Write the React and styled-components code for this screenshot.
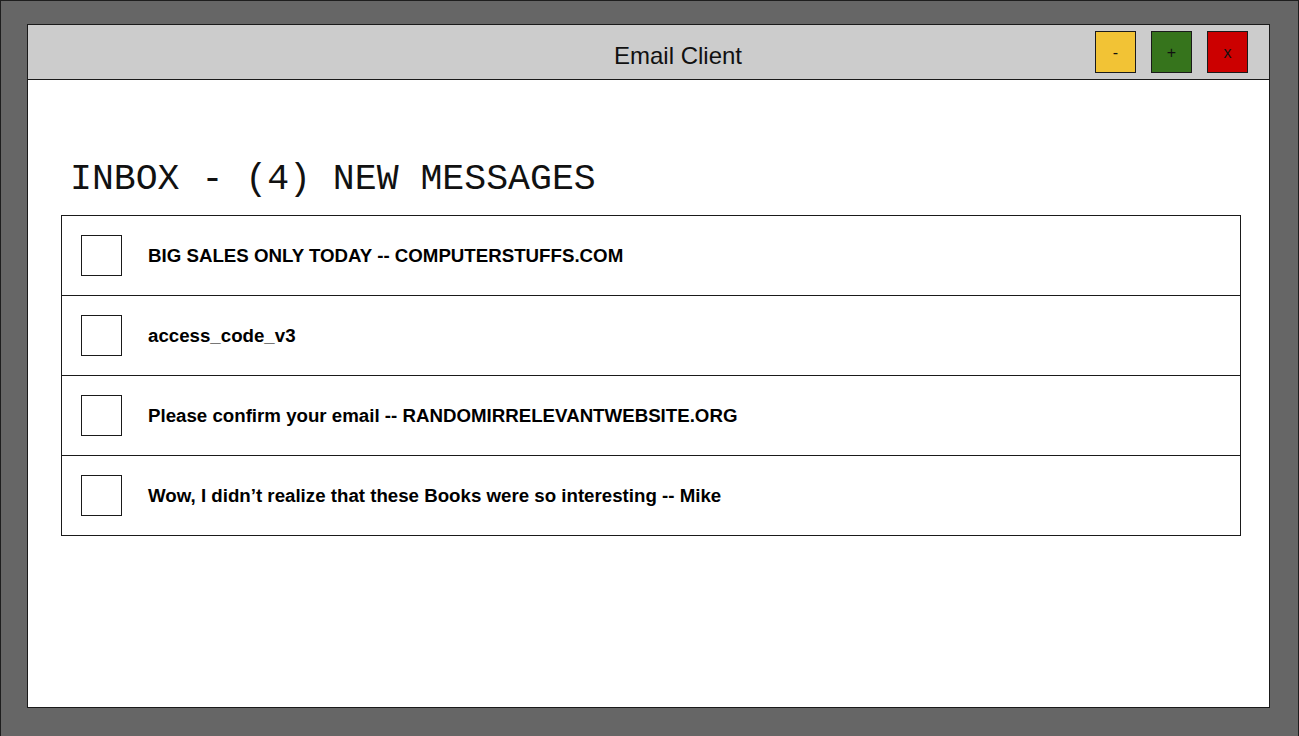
import styled, { createGlobalStyle } from 'styled-components'

const GlobalStyle = createGlobalStyle`
html, body {
  margin: 0;
  padding: 0;
  background: #666666;
}
body {
  font-family: "Liberation Sans", Arial, sans-serif;
  overflow: hidden;
}
`

const Screen = styled.div`
box-sizing: border-box;
width: 1299px;
height: 736px;
border: 1px solid #1e1e1e;
border-bottom: none;
background: #666666;
padding: 23px 0 0 26px;
`

const Window = styled.div`
box-sizing: border-box;
width: 1243px;
height: 684px;
background: #fff;
border: 1px solid #1a1a1a;
display: flex;
flex-direction: column;
`

const TitleBar = styled.div`
box-sizing: border-box;
height: 55px;
background: #cccccc;
border-bottom: 1px solid #1a1a1a;
display: flex;
align-items: center;
padding-right: 21px;
`

const Title = styled.div`
flex: 1;
text-align: center;
padding: 7px 0 0 233px;
font-size: 24px;
color: #111;
`

const Controls = styled.div`
display: flex;
gap: 15px;
`

const WinButton = styled.div`
box-sizing: border-box;
width: 41px;
height: 42px;
border: 1px solid #1a1a1a;
background: ${({ $color }) => $color};
display: flex;
align-items: center;
justify-content: center;
padding-top: 2px;
font-size: 16px;
color: #111;
`

const Content = styled.div`
padding: 79px 28px 0 33px;
`

const Heading = styled.h1`
margin: 0 0 14px 9px;
font-family: "Liberation Mono", monospace;
font-weight: normal;
font-size: 36.5px;
line-height: 42px;
color: #111;
`

const List = styled.div`
width: 1180px;
box-sizing: border-box;
border: 1px solid #1a1a1a;
`

const Row = styled.div`
height: 79px;
display: flex;
align-items: center;
padding-left: 19px;
gap: 26px;
& + & {
  border-top: 1px solid #1a1a1a;
}
`

const Check = styled.div`
box-sizing: border-box;
width: 41px;
height: 41px;
border: 1px solid #1a1a1a;
background: #fff;
`

const Subject = styled.div`
font-weight: bold;
font-size: 18.7px;
color: #000;
`

const messages = [
  'BIG SALES ONLY TODAY -- COMPUTERSTUFFS.COM',
  'access_code_v3',
  'Please confirm your email -- RANDOMIRRELEVANTWEBSITE.ORG',
  'Wow, I didn\u2019t realize that these Books were so interesting -- Mike',
]

function App() {
  return (
    <>
      <GlobalStyle />
      <Screen>
        <Window>
          <TitleBar>
            <Title>Email Client</Title>
            <Controls>
              <WinButton $color="#f2c335">-</WinButton>
              <WinButton $color="#36741c">+</WinButton>
              <WinButton $color="#cc0000">x</WinButton>
            </Controls>
          </TitleBar>
          <Content>
            <Heading>INBOX - (4) NEW MESSAGES</Heading>
            <List>
              {messages.map((m) => (
                <Row key={m}>
                  <Check />
                  <Subject>{m}</Subject>
                </Row>
              ))}
            </List>
          </Content>
        </Window>
      </Screen>
    </>
  )
}

export default App
